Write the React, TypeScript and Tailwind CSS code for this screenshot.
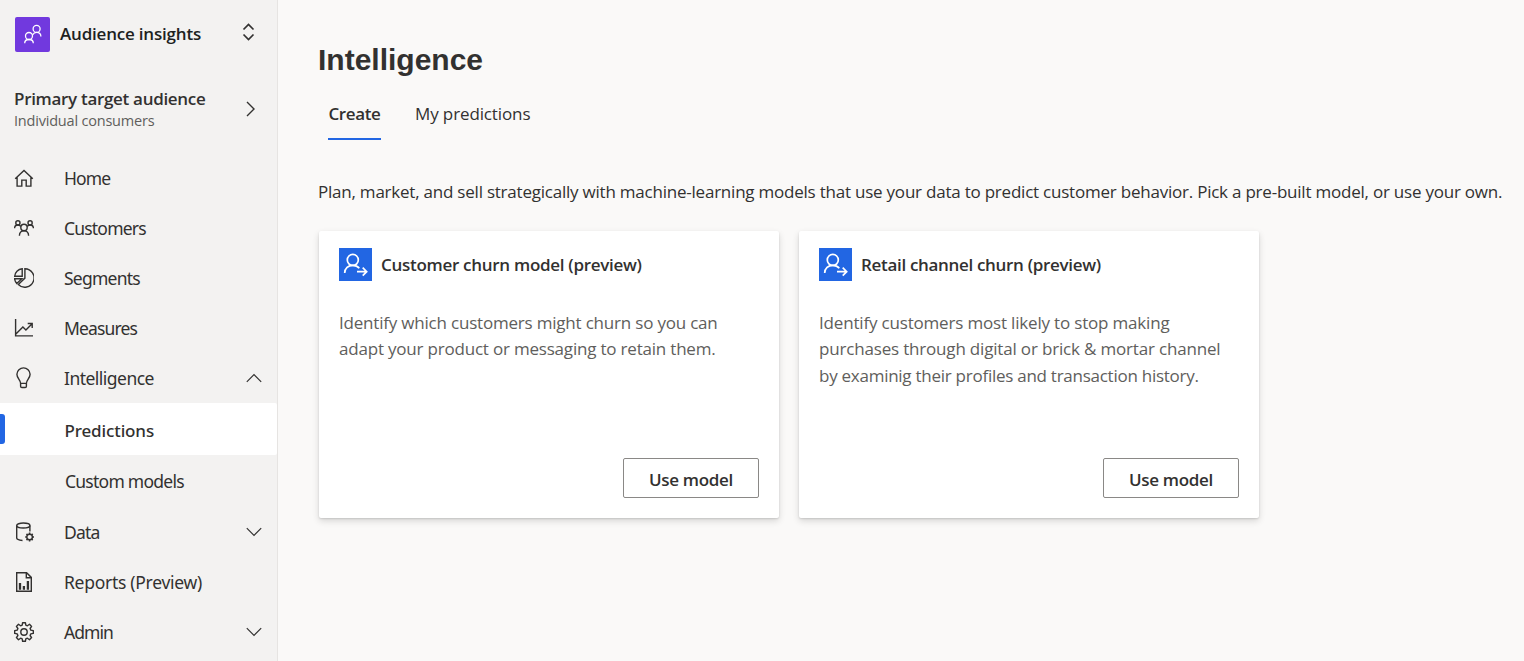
import React from "react";

type IconProps = { className?: string };

const stroke = {
  fill: "none",
  stroke: "currentColor",
  strokeWidth: 1.4,
} as const;

function HomeIcon() {
  return (
    <svg width="20" height="20" viewBox="0 0 20 20" {...stroke}>
      <path d="M1.200 10.700 10 2.400l8.800 8.300M3.100 9.300v8.800h4.700v-6h4.400v6h4.700V9.300" />
    </svg>
  );
}

function CustomersIcon() {
  return (
    <svg width="20" height="20" viewBox="0 0 20 20" {...stroke}>
      <circle cx="3.900" cy="4.900" r="2.100" />
      <circle cx="16.100" cy="4.900" r="2.100" />
      <circle cx="10" cy="9.500" r="3.200" />
      <path d="M.6 10.300C.6 8.300 2.100 7 3.900 7c1.300 0 2.300.6 2.900 1.500M19.400 10.300c0-2-1.500-3.300-3.300-3.300-1.300 0-2.300.6-2.900 1.500M5.400 17.700c0-3 2-5 4.600-5s4.600 2 4.600 5" />
    </svg>
  );
}

function SegmentsIcon() {
  return (
    <svg width="20" height="20" viewBox="0 0 20 20" {...stroke}>
      <path d="M10.900.8a9.200 9.200 0 1 1-6.600 15.700l6.600-6.400z" />
      <path d="M8.200.7v7.600H.7C.9 4.400 4 1 8.200.7z" />
      <path d="M.6 10.700h7.200l-5 4.800C1.500 14 .7 12.500.6 10.700z" />
    </svg>
  );
}

function MeasuresIcon() {
  return (
    <svg width="20" height="20" viewBox="0 0 20 20" {...stroke}>
      <path d="M1.600 1v16.900H19M1.900 16l7-6.900 3 2.900 6.200-6.300M13.700 5.500h4.500V10" />
    </svg>
  );
}

function BulbIcon() {
  return (
    <svg width="20" height="22" viewBox="0 0 20 22" {...stroke}>
      <path d="M6.600 16.400c0-3.600-3.700-5.200-3.700-9.200A6.600 6.600 0 0 1 9.500.9a6.600 6.600 0 0 1 6.600 6.300c0 4-3.700 5.600-3.700 9.200zM6.600 16.400v2.800c0 .8.500 1.300 1.300 1.300h3.200c.8 0 1.300-.5 1.300-1.300v-2.800" />
    </svg>
  );
}

function DataIcon() {
  return (
    <svg width="20" height="20" viewBox="0 0 20 20" {...stroke}>
      <ellipse cx="9.300" cy="3.500" rx="6.600" ry="2.500" />
      <path d="M2.700 3.500v12.600c0 1.300 2.600 2.200 5.800 2.400M15.900 3.500v6" />
      <circle cx="15.600" cy="15" r="2.800" />
      <path
        strokeWidth="1.600"
        d="M15.600 12.200v-1.700M15.600 17.800v1.700M18.400 15H20M12.800 15h-1.600M17.600 13l1.100-1.100M13.600 17l-1.100 1.100M17.600 17l1.100 1.100M13.600 13l-1.100-1.100"
      />
    </svg>
  );
}

function ReportsIcon() {
  return (
    <svg width="20" height="20" viewBox="0 0 20 20" {...stroke}>
      <path d="M2.700.7h9.900l4.700 4.700v13.900H2.700zM12.300.9v4.900h4.800" />
      <path strokeWidth="2.300" d="M6 11v6.700M9.900 14v3.700M13.900 9v8.700" />
    </svg>
  );
}

function GearIcon() {
  return (
    <svg width="20" height="20" viewBox="0 0 20 20" strokeLinejoin="round" {...stroke}>
      <circle cx="10" cy="10" r="3.200" />
      <path d="M8.600.7h2.800l.4 2.400 1.600.7 2.100-1.500 2.100 2.100-1.500 2.100.7 1.600 2.500.5v2.800l-2.500.5-.7 1.600 1.500 2.100-2.100 2.100-2.100-1.500-1.600.7-.4 2.400H8.600l-.4-2.400-1.600-.7-2.100 1.500-2.100-2.100 1.500-2.100-.7-1.600-2.500-.5V8.600l2.500-.5.7-1.600-1.500-2.100 2.100-2.100 2.100 1.500 1.600-.7z" />
    </svg>
  );
}

function Chevron({ className = "" }: IconProps) {
  return (
    <svg width="16" height="10" viewBox="0 0 16 10" className={className} {...stroke} strokeWidth="1.200">
      <path d="M.8 1.200 8 8.400l7.200-7.200" />
    </svg>
  );
}

function AudienceIcon() {
  return (
    <svg width="35" height="35" viewBox="0 0 35 35" fill="none" stroke="#fff" strokeWidth="1.300">
      <circle cx="21.600" cy="11.900" r="3.500" />
      <path d="M17.700 17.700c.8-1.500 2.200-2.300 3.900-2.300 2.500 0 4.300 1.700 4.300 4.200" />
      <circle cx="14" cy="19" r="3.500" />
      <path d="M9.700 26.200c0-2.300 1.900-3.700 4.300-3.700s4.300 1.400 4.300 3.700" />
    </svg>
  );
}

function ChurnIcon() {
  return (
    <svg width="33" height="33" viewBox="0 0 33 33" fill="none" stroke="#fff" strokeWidth="1.700">
      <circle cx="13.800" cy="11.900" r="5.500" />
      <path d="M5.700 25c0-4.500 3.600-7.700 8.100-7.700 2.700 0 5 1.100 6.500 3M18 23.700h9.300M23.700 19.700l4 4-4 4" />
    </svg>
  );
}

type NavItemProps = {
  label: string;
  icon: React.ReactNode;
  tracking: string;
  expanded?: boolean;
};

function NavItem({ label, icon, tracking, expanded }: NavItemProps) {
  return (
    <a className="flex h-[50px] shrink-0 items-center pl-[14px] pr-[15px]">
      <span className="flex w-[50px] shrink-0 items-center">{icon}</span>
      <span className={`flex-1 whitespace-nowrap font-['Noto_Sans',sans-serif] text-[17.5px] ${tracking}`}>{label}</span>
      {expanded !== undefined && <Chevron className={expanded ? "rotate-180" : ""} />}
    </a>
  );
}

type CardProps = { title: string; titleTracking: string; lines: { text: string; tracking: string }[] };

function ModelCard({ title, titleTracking, lines }: CardProps) {
  return (
    <article className="flex h-[287px] w-[460px] flex-col rounded-[2px] bg-white px-5 pt-[17px] pb-5 shadow-[0_3px_7px_rgba(0,0,0,0.14),0_1px_2px_rgba(0,0,0,0.12)]">
      <header className="flex items-center gap-[9px]">
        <span className="h-[33px] w-[33px] shrink-0 bg-[#2266e3]">
          <ChurnIcon />
        </span>
        <h2 className={`whitespace-nowrap pt-px text-[17px] font-semibold ${titleTracking}`}>{title}</h2>
      </header>
      <p className="mt-[28.5px] whitespace-nowrap text-[17px] leading-[26.5px] text-[#605e5c]">
        {lines.map((line) => (
          <span key={line.text} className={`block ${line.tracking}`}>
            {line.text}
          </span>
        ))}
      </p>
      <button className="mt-auto h-10 w-[136px] self-end rounded-[2px] border border-[#8a8886] pt-[3px] text-[17px] font-semibold tracking-[-0.3px]">
        Use model
      </button>
    </article>
  );
}

export default function App() {
  return (
    <div className="flex h-[661px] w-[1524px] overflow-hidden bg-[#faf9f8] font-['Open_Sans',sans-serif] text-[#323130]">
      <aside className="flex w-[278px] shrink-0 flex-col border-r border-[#e6e4e2] bg-[#f3f2f1]">
        <div className="flex h-[68px] items-center pl-[15px] pr-[22px]">
          <span className="h-[35px] w-[35px] shrink-0 rounded-[2px] bg-[#7139de]">
            <AudienceIcon />
          </span>
          <span className="ml-[10px] flex-1 whitespace-nowrap pb-px text-[17px] font-semibold tracking-[-0.2px] text-[#201f1e]">
            Audience insights
          </span>
          <svg className="mb-1" width="13" height="18" viewBox="0 0 13 18" fill="none" stroke="currentColor" strokeWidth="1.700">
            <path d="m1.500 6.500 5-5 5 5M1.500 11.500l5 5 5-5" />
          </svg>
        </div>
        <div className="flex h-[85px] items-center pb-1 pl-[14px] pr-[22px]">
          <div className="flex-1 whitespace-nowrap">
            <div className="text-[17px] leading-[23px] font-semibold tracking-[-0.31px]">Primary target audience</div>
            <div className="text-[14.5px] leading-[21px] tracking-[-0.2px] text-[#605e5c]">Individual consumers</div>
          </div>
          <svg width="9" height="16" viewBox="0 0 9 16" fill="none" stroke="currentColor" strokeWidth="1.400">
            <path d="m1 1 7 7-7 7" />
          </svg>
        </div>
        <nav className="flex flex-col">
          <NavItem label="Home" icon={<HomeIcon />} tracking="tracking-[-0.9px]" />
          <NavItem label="Customers" icon={<CustomersIcon />} tracking="tracking-[-0.8px]" />
          <NavItem label="Segments" icon={<SegmentsIcon />} tracking="tracking-[-0.75px]" />
          <NavItem label="Measures" icon={<MeasuresIcon />} tracking="tracking-[-0.85px]" />
          <NavItem label="Intelligence" icon={<BulbIcon />} tracking="tracking-[-0.52px]" expanded />
          <a className="flex h-[52px] w-[277px] items-center rounded-r-[2px] bg-white">
            <span className="h-[30px] w-[5px] rounded-r-[3px] bg-[#2266e3]" />
            <span className="ml-[59.5px] pt-[3px] font-['Noto_Sans',sans-serif] text-[17px] font-medium tracking-[-0.12px]">
              Predictions
            </span>
          </a>
          <a className="flex h-[52px] items-center pl-[65px] font-['Noto_Sans',sans-serif] text-[17.5px] tracking-[-0.75px]">
            Custom models
          </a>
          <NavItem label="Data" icon={<DataIcon />} tracking="tracking-[-0.8px]" expanded={false} />
          <NavItem label="Reports (Preview)" icon={<ReportsIcon />} tracking="tracking-[-0.28px]" />
          <NavItem label="Admin" icon={<GearIcon />} tracking="tracking-[-0.95px]" expanded={false} />
        </nav>
      </aside>
      <main className="flex-1 pl-10 pt-10">
        <h1 className="font-['Liberation_Sans',sans-serif] text-[30px] leading-10 font-bold">Intelligence</h1>
        <div className="ml-[10px] mt-4 flex h-11 gap-[34px] text-[17px]">
          <div className="w-[53px] border-b-2 border-[#2266e3] pt-[5px] pl-[0.5px] font-semibold tracking-[-0.4px]">
            Create
          </div>
          <div className="pt-[5px] tracking-[-0.12px]">My predictions</div>
        </div>
        <p className="mt-[39px] whitespace-nowrap text-[17px] leading-[26px] tracking-[-0.223px]">
          Plan, market, and sell strategically with machine-learning models that use your data to predict customer
          behavior. Pick a pre-built model, or use your own.
        </p>
        <div className="ml-px mt-[26px] flex gap-5">
          <ModelCard
            title="Customer churn model (preview)"
            titleTracking="tracking-[-0.29px]"
            lines={[
              { text: "Identify which customers might churn so you can", tracking: "tracking-[-0.2px]" },
              { text: "adapt your product or messaging to retain them.", tracking: "tracking-[-0.2px]" },
            ]}
          />
          <ModelCard
            title="Retail channel churn (preview)"
            titleTracking="tracking-[-0.32px]"
            lines={[
              { text: "Identify customers most likely to stop making", tracking: "tracking-[-0.18px]" },
              { text: "purchases through digital or brick & mortar channel", tracking: "tracking-[-0.18px]" },
              { text: "by examinig their profiles and transaction history.", tracking: "tracking-[-0.26px]" },
            ]}
          />
        </div>
      </main>
    </div>
  );
}
